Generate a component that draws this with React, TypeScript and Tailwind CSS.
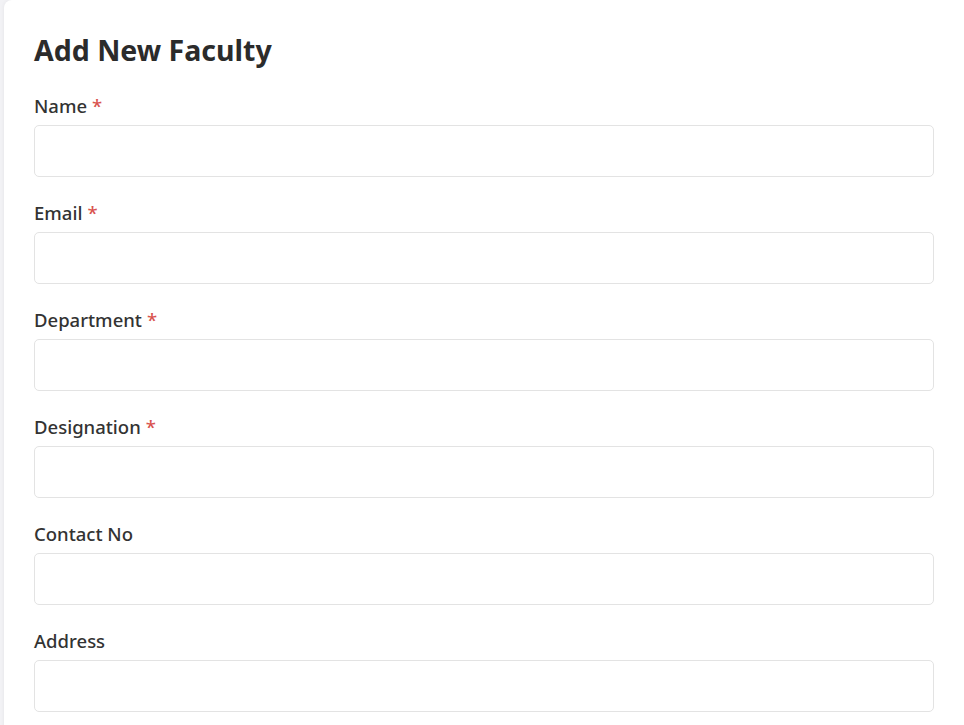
import { useState } from "react";

const fields = [
    { key: "name", label: "Name", required: true },
    { key: "email", label: "Email", required: true },
    { key: "department", label: "Department", required: true },
    { key: "designation", label: "Designation", required: true },
    { key: "contact", label: "Contact No", required: false },
    { key: "address", label: "Address", required: false },
];

export default function App() {
    const [values, setValues] = useState<Record<string, string>>({});

    return (
        <div
            className="min-h-screen bg-[#f2f2f5] pl-[4px]"
            style={{ fontFamily: '"Noto Sans", "Open Sans", sans-serif' }}
        >
            <div className="rounded-tl-lg bg-white px-[30px] pt-[28px] pb-10 shadow-[0_0_4px_rgba(0,0,0,0.06)]">
                <h1 className="text-[28.5px] font-bold leading-[44px] text-[#2b2b2b]">Add New Faculty</h1>
                <form className="mt-[20px] flex flex-col gap-[22px]">
                    {fields.map((field) => (
                        <label key={field.key} className="flex flex-col">
                            <span className="mb-[5px] text-[18.5px] leading-[28px] font-medium text-[#333333]">
                                {field.label}
                                {field.required && <span className="ml-[5px] text-[#d9534f]">*</span>}
                            </span>
                            <input
                                value={values[field.key] ?? ""}
                                onChange={(event) =>
                                    setValues((prev) => ({ ...prev, [field.key]: event.target.value }))
                                }
                                className="h-[52px] w-full rounded-[5px] border border-[#e3e3e3] bg-white px-3 text-base text-[#333333] focus:outline-none"
                            />
                        </label>
                    ))}
                </form>
            </div>
        </div>
    );
}
